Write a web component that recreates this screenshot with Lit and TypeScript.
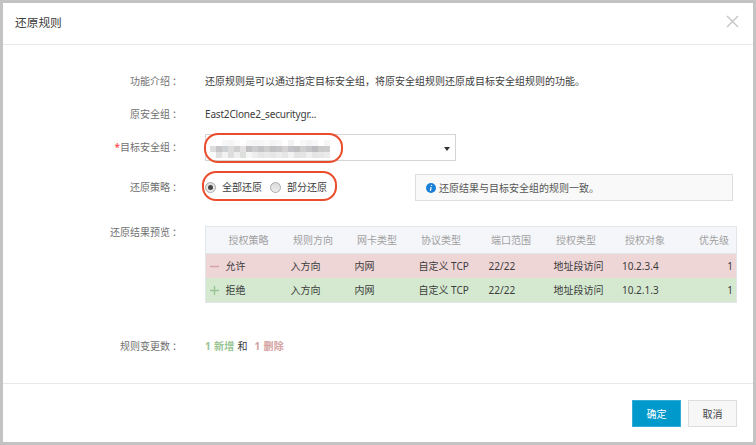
import { LitElement, html, css, svg } from "lit";
import { customElement } from "lit/decorators.js";

const HEAD = ["授权策略", "规则方向", "网卡类型", "协议类型", "端口范围", "授权类型", "授权对象", "优先级"];
const ROWS = [
  { kind: "del", cells: ["允许", "入方向", "内网", "自定义 TCP", "22/22", "地址段访问", "10.2.3.4", "1"] },
  { kind: "add", cells: ["拒绝", "入方向", "内网", "自定义 TCP", "22/22", "地址段访问", "10.2.1.3", "1"] },
];

const CELL = 6;
const MOSAIC = [
  ["", "", "#f7f7f7", "#f5f5f5", "#fbfbfb", "", "#f7f7f7", "#f4f4f4", "#f6f6f6", "#fafafa", "#f4f4f4", "#f8f8f8", "", "#f3f3f3", "", "#f8f8f8", "#f3f3f3", "#f7f7f7", "", "#f6f6f6"],
  ["#dcdcdc", "#c6c6c8", "#cdd1d5", "#dcdcdc", "#cfcfcf", "#e4e2e0", "#c0c0c2", "#cccccf", "#c3c3c6", "#cecece", "#bfc1c4", "#c6c6c8", "#d4d2d2", "#c4c4c8", "#bfbfc2", "#d0cfcf", "#c6c6ca", "#bcbcc0", "#cacaca", "#cccccc"],
  ["#fafafa", "#e0e0e0", "#f2f2f2", "#dedede", "#eeeeee", "#dddfdd", "#f6f6f6", "#ededed", "#e6e6e6", "#e9e9e9", "#e6e6e6", "#ececec", "#e6e6e6", "#f2f2f2", "#e3e3e3", "#e4e4e4", "#efefef", "#e4e4e4", "#e7e7e7", "#ebebeb"],
];

const colon = html`<span class="colon">：</span>`;

@customElement("app-root")
export class AppRoot extends LitElement {
  static styles = css`
    :host { display: block; }
    * { box-sizing: border-box; }
    .dialog { width: 756px; height: 445px; border: 3px solid #c3c3c3; background: #fff; display: flex; flex-direction: column; font: 10px/14px "Noto Sans", "Noto Sans CJK SC", sans-serif; color: #3c3c3c; overflow: hidden; }
    .header { height: 42px; border-bottom: 1px solid #e9e9e9; padding: 0 14px 3px 12px; display: flex; justify-content: space-between; align-items: center; font-size: 11.7px; }
    .close { width: 13px; height: 13px; margin-top: -2px; }
    .body { flex: 1; padding-top: 29px; }
    .row { display: flex; align-items: flex-start; }
    .label { width: 177px; margin-right: 25px; text-align: right; color: #707070; white-space: nowrap; }
    .colon { display: inline-block; width: 10px; text-indent: 2px; text-align: left; }
    .req { color: #f33; }
    .intro { height: 33px; }
    .source { height: 27px; }
    .name { letter-spacing: -0.18px; }
    .group { height: 39px; }
    .group .label { padding-top: 6px; }
    .select { position: relative; width: 251px; height: 27px; border: 1px solid #d4d4d4; padding: 5px 5px 0 4px; display: flex; justify-content: space-between; }
    .mosaic { display: block; width: 120px; height: 18px; }
    .caret { width: 0; height: 0; margin-top: 7px; border: 3px solid transparent; border-top: 4px solid #333; border-bottom: 0; }
    .ring { position: absolute; border: 2px solid #ea4c2c; border-radius: 14px; }
    .ring-group { left: -2px; top: -2px; width: 139px; height: 30px; }
    .ring-policy { left: -3px; top: -2px; width: 135px; height: 30px; }
    .policy { height: 53px; }
    .policy .label { padding-top: 7px; }
    .choices { position: relative; width: 210px; height: 28px; display: flex; align-items: center; }
    .radio { width: 11px; height: 11px; border-radius: 50%; border: 1px solid #aaa; background: linear-gradient(#dcdcdc, #ececec); display: flex; align-items: center; justify-content: center; }
    .dot { width: 5px; height: 5px; border-radius: 50%; background: #444; }
    .choice { margin: 0 8px 0 6px; }
    .info { width: 318px; height: 27px; margin-top: 1px; border: 1px solid #dedede; background: #f9f9f9; color: #555; padding-left: 10px; display: flex; align-items: center; }
    .info svg { width: 10px; height: 10px; margin-right: 3px; }
    .preview { height: 113px; }
    .preview .label { margin-top: -1px; }
    .table { width: 532px; border: 1px solid #e1e6eb; }
    .line { display: grid; height: 24px; align-items: center; }
    .tr { grid-template-columns: 19.5px 65px 64px 64px 70px 65px 68.5px 1fr auto; padding-right: 3px; }
    .th { grid-template-columns: 64.5px 64px 64px 70px 65px 69px 1fr auto; padding: 0 7px 0 22.5px; height: 27px; background: #f5f6fa; color: #a0a0a0; border-bottom: 1px solid #e1e6eb; }
    .del { background: #eed5d6; }
    .add { background: #d4e9d0; }
    .sign { width: 9px; height: 9px; margin-left: 4px; }
    .count { display: flex; }
    .count b { letter-spacing: 0.3px; }
    .green { color: #98c593; margin-right: 3px; }
    .red { color: #d3a1a1; margin-left: 7px; }
    .footer { height: 59px; border-top: 1px solid #e9e9e9; display: flex; justify-content: flex-end; gap: 7px; padding: 16px 16px 0 0; }
    .btn { width: 49px; height: 27px; border: 1px solid #ddd; background: #f7f7f7; color: #444; font: inherit; padding: 0; }
    .primary { background: #0099cc; border-color: #30acd6; color: #fff; }
  `;

  render() {
    return html`<div class="dialog">
      <div class="header"><span>还原规则</span>
        <svg class="close" viewBox="0 0 13 13"><path d="M1 1L12 12M12 1L1 12" stroke="#c4c4c4" stroke-width="1.4" fill="none" /></svg>
      </div>
      <div class="body">
        <div class="row intro"><div class="label">功能介绍${colon}</div><div>还原规则是可以通过指定目标安全组，将原安全组规则还原成目标安全组规则的功能。</div></div>
        <div class="row source"><div class="label">原安全组${colon}</div><div class="name">East2Clone2_securitygr...</div></div>
        <div class="row group"><div class="label"><span class="req">*</span>目标安全组${colon}</div>
          <div class="select">
            <svg class="mosaic" viewBox="0 0 120 18" shape-rendering="crispEdges">
              ${MOSAIC.map((r, y) => r.map((c, x) => c ? svg`<rect x=${x * CELL} y=${y * CELL} width="6" height="6" fill=${c} />` : null))}
            </svg>
            <span class="caret"></span><span class="ring ring-group"></span>
          </div>
        </div>
        <div class="row policy"><div class="label">还原策略${colon}</div>
          <div class="choices"><span class="radio"><span class="dot"></span></span><span class="choice">全部还原</span><span class="radio"></span><span class="choice">部分还原</span><span class="ring ring-policy"></span></div>
          <div class="info"><svg viewBox="0 0 10 10"><circle cx="5" cy="5" r="5" fill="#1b80d8" /><path d="M5.7 2L5.4 3M5.1 4.1L4.4 7.8" stroke="#fff" stroke-width="1.2" fill="none" /></svg>还原结果与目标安全组的规则一致。</div>
        </div>
        <div class="row preview"><div class="label">还原结果预览${colon}</div>
          <div class="table">
            <div class="line th">${HEAD.map((h) => html`<span>${h}</span>`)}</div>
            ${ROWS.map((r) => html`<div class="line tr ${r.kind}">
              <svg class="sign" viewBox="0 0 9 9"><path d=${r.kind === "add" ? "M0 4.5H9M4.5 0V9" : "M0 4.5H9"} stroke=${r.kind === "add" ? "#98c593" : "#d3a1a1"} stroke-width="1.4" /></svg>
              ${r.cells.map((c) => html`<span>${c}</span>`)}</div>`)}
          </div>
        </div>
        <div class="row"><div class="label">规则变更数${colon}</div><div class="count"><b class="green">1 新增</b><span>和</span><b class="red">1 删除</b></div></div>
      </div>
      <div class="footer"><button class="btn primary">确定</button><button class="btn">取消</button></div>
    </div>`;
  }
}
